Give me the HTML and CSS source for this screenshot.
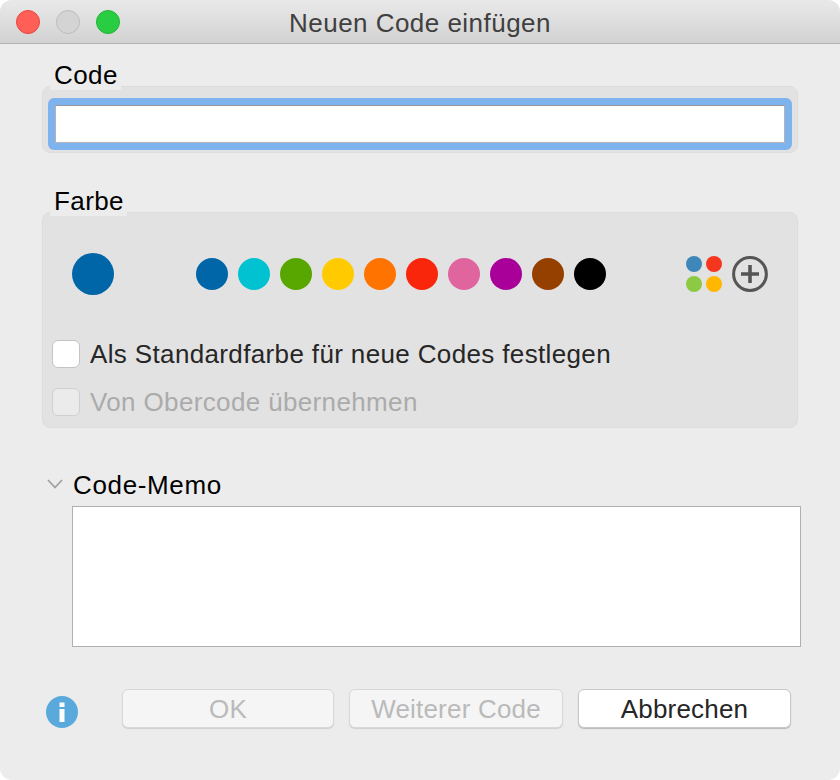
FILE: index.html
```html
<!DOCTYPE html>
<html lang="de">
<head>
<meta charset="utf-8">
<title>Neuen Code einfügen</title>
<link rel="stylesheet" href="styles.css">
</head>
<body>
<div class="window">
  <header class="titlebar">
    <div class="lights">
      <span class="light red"></span>
      <span class="light grey"></span>
      <span class="light green"></span>
    </div>
    <div class="title">Neuen Code einfügen</div>
  </header>
  <main class="content">
    <section class="group code-group">
      <div class="legend">Code</div>
      <div class="panel code-panel">
        <div class="focus-ring"><div class="input"></div></div>
      </div>
    </section>
    <section class="group color-group">
      <div class="legend">Farbe</div>
      <div class="panel color-panel">
        <div class="color-row">
          <span class="current"></span>
          <div class="swatches">
            <span class="dot c1"></span><span class="dot c2"></span><span class="dot c3"></span><span class="dot c4"></span><span class="dot c5"></span><span class="dot c6"></span><span class="dot c7"></span><span class="dot c8"></span><span class="dot c9"></span><span class="dot c10"></span>
          </div>
          <div class="palette">
            <span class="mini m1"></span><span class="mini m2"></span><span class="mini m3"></span><span class="mini m4"></span>
          </div>
          <svg class="plus" width="36" height="36" viewBox="0 0 36 36"><circle cx="18" cy="18" r="16.4" fill="none" stroke="#555" stroke-width="3"/><path d="M18 9v18M9 18h18" fill="none" stroke="#555" stroke-width="3.600"/></svg>
        </div>
        <label class="check first"><span class="box"></span><span>Als Standardfarbe für neue Codes festlegen</span></label>
        <label class="check disabled"><span class="box"></span><span>Von Obercode übernehmen</span></label>
      </div>
    </section>
    <section class="memo">
      <div class="memo-head">
        <svg class="chevron" width="16" height="10" viewBox="0 0 16 10"><path d="M1 1l7 7.500L15 1" fill="none" stroke="#a0a0a0" stroke-width="1.800"/></svg>
        <span>Code-Memo</span>
      </div>
      <div class="memo-box"></div>
    </section>
    <footer class="actions">
      <svg class="info" width="32" height="32" viewBox="0 0 32 32"><circle cx="16" cy="16" r="16" fill="#5aa9dc"/><rect x="13.500" y="6.500" width="5" height="4.500" fill="#fff"/><rect x="13.500" y="13" width="5" height="13" fill="#fff"/></svg>
      <button class="btn off ok">OK</button>
      <button class="btn off more">Weiterer Code</button>
      <button class="btn cancel">Abbrechen</button>
    </footer>
  </main>
</div>
</body>
</html>
```
FILE: styles.css
```css
* { box-sizing: border-box; }
html, body { margin: 0; padding: 0; background: #fff; }
body { width: 840px; height: 780px; overflow: hidden; font-family: "Liberation Sans", Arial, sans-serif; }
.window { width: 840px; height: 780px; background: #ececec; border-radius: 12px; overflow: hidden; display: flex; flex-direction: column; }
.titlebar { height: 44px; flex: none; display: flex; align-items: center; position: relative; background: linear-gradient(#e9e9e9, #d2d2d2); border-bottom: 1px solid #b2b2b2; }
.lights { display: flex; gap: 16px; padding-left: 16px; }
.light { width: 24px; height: 24px; border-radius: 50%; border: 1px solid; }
.red { background: #ff5f57; border-color: #e5473f; }
.grey { background: #d4d4d4; border-color: #bcbcbc; }
.green { background: #28cd41; border-color: #23b537; }
.title { position: absolute; left: 0; right: 0; top: 0; line-height: 46px; text-align: center; font-size: 26px; letter-spacing: 0.47px; color: #404040; }
.content { flex: 1; padding: 0 39px 0 42px; display: flex; flex-direction: column; }
.group { position: relative; width: 756px; }
.code-group { margin-top: 42px; }
.color-group { margin-top: 59px; }
.legend { position: absolute; left: 8px; top: -22px; padding: 0 3px 0 4px; height: 26px; line-height: 22px; font-size: 26px; letter-spacing: 0.4px; color: #000; background: #ececec; z-index: 1; }
.panel { background: #e2e2e2; border: 1px solid #dcdcdc; border-radius: 8px; }
.code-panel { height: 67px; padding: 11px 0 0 5px; }
.focus-ring { width: 744px; height: 52px; background: #7fb3ee; border-radius: 6px; padding: 7px; }
.input { height: 38px; background: #fff; border: 1px solid #b4b4b4; border-top-color: #999; }
.color-panel { height: 216px; padding: 0 0 0 9px; }
.color-row { display: flex; align-items: center; height: 80px; margin-top: 21px; padding-left: 20px; }
.current { width: 42px; height: 42px; border-radius: 50%; background: #0066a8; margin-right: 82px; }
.swatches { display: flex; gap: 10px; margin-right: 80px; }
.dot { width: 32px; height: 32px; border-radius: 50%; }
.c1 { background: #0066a8; } .c2 { background: #00c2d0; } .c3 { background: #58a700; } .c4 { background: #ffcb00; } .c5 { background: #ff7300; } .c6 { background: #f9260b; } .c7 { background: #e0649d; } .c8 { background: #a9009a; } .c9 { background: #964000; } .c10 { background: #000; }
.palette { display: grid; grid-template-columns: 16px 16px; gap: 4px; margin-right: 10px; }
.mini { width: 16px; height: 16px; border-radius: 50%; }
.m1 { background: #3d88b9; } .m2 { background: #f5361f; } .m3 { background: #8cca44; } .m4 { background: #ffb700; }
.plus { display: block; }
.check { display: flex; align-items: center; gap: 10px; height: 28px; font-size: 26px; letter-spacing: 0.36px; color: #262626; }
.check.first { margin-top: 26px; }
.check.disabled { margin-top: 20px; color: #ababab; }
.box { width: 28px; height: 28px; flex: none; background: #fff; border: 1px solid #c4c4c4; border-radius: 6px; }
.disabled .box { background: #ebebeb; border-color: #d0d0d0; }
.memo { margin-top: 39px; }
.memo-head { display: flex; align-items: center; height: 36px; font-size: 26px; letter-spacing: 0.65px; color: #000; padding-left: 5px; gap: 10px; }
.chevron { margin-top: -2px; }
.memo-box { margin: 3px 0 0 30px; width: 729px; height: 141px; background: #fff; border: 1px solid #b0b0b0; }
.actions { display: flex; align-items: flex-start; margin-top: 42px; padding-left: 4px; }
.info { margin: 7px 44px 0 0; }
.btn { height: 39px; padding: 1px 0 0; border-radius: 6px; font: 26px "Liberation Sans", Arial, sans-serif; letter-spacing: 0.2px; background: #fff; border: 1px solid #c8c8c8; box-shadow: 0 1px 1px #b8b8b8; color: #262626; }
.btn.off { background: #f5f5f5; color: #bababa; border-color: #d8d8d8; box-shadow: 0 1px 1px #cfcfcf; }
.ok { width: 212px; margin-right: 15px; }
.more { width: 214px; margin-right: 15px; }
.cancel { width: 213px; }
```
